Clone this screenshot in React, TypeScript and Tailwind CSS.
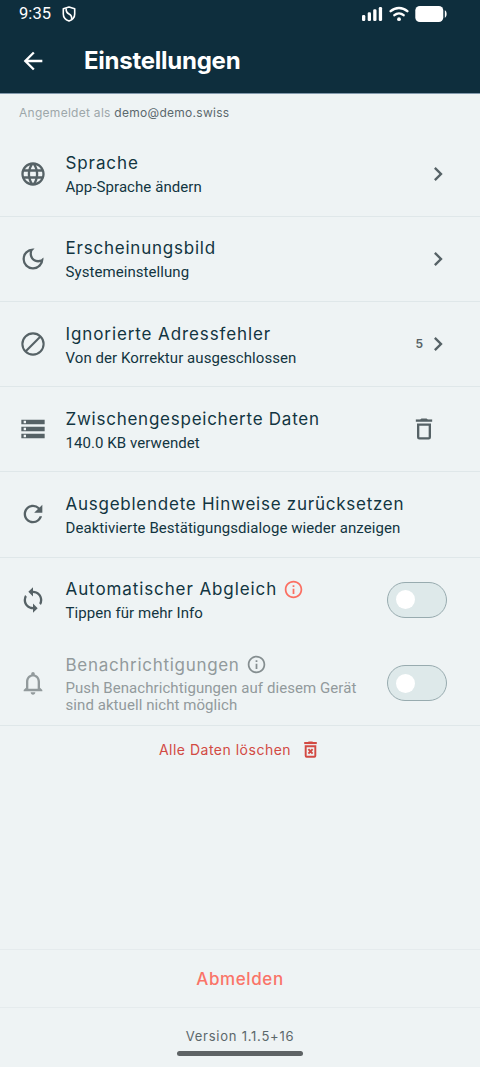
import type { ReactNode } from 'react';
import type { IconType } from 'react-icons';
import {
  MdArrowBack,
  MdChevronRight,
  MdInfoOutline,
  MdLanguage,
  MdNotificationsNone,
  MdOutlineDarkMode,
  MdRefresh,
  MdStorage,
  MdSync,
} from 'react-icons/md';

function StatusBar() {
  return (
    <div className="flex h-7 items-center pl-[19px] pr-[33px]">
      <span className="font-[Roboto,sans-serif] text-[16.5px] leading-none tracking-[0.1px]">9:35</span>
      <svg className="ml-[11px]" width="14" height="16" viewBox="0 0 14 16" fill="none" stroke="currentColor" strokeWidth="1.6">
        <path d="M7 1 12.700 2.800V8c0 3.200-2.200 5.700-5.700 7C3.500 13.700 1.300 11.200 1.300 8V2.800z" strokeLinejoin="round" />
        <path d="M4.200 2.500c-.4 3 .6 4.300 2.800 5.500s3 2.800 2.600 5" />
      </svg>
      <svg className="ml-auto" width="22" height="16" viewBox="0 0 22 16" fill="currentColor">
        <rect x="1" y="9" width="3.300" height="6" rx="1.300" />
        <rect x="6.700" y="6.300" width="3.300" height="8.700" rx="1.300" />
        <rect x="12.200" y="3.300" width="3.300" height="11.700" rx="1.300" />
        <rect x="17.800" y="1" width="3.300" height="14" rx="1.300" />
      </svg>
      <svg className="ml-[6px]" width="20" height="16" viewBox="0 0 20 16" fill="none" stroke="currentColor" strokeWidth="2.500" strokeLinecap="round">
        <path d="M1.700 5.200c4.700-4.300 11.900-4.300 16.600 0" />
        <path d="M5.400 9.100c2.700-2.300 6.500-2.300 9.200 0" />
        <circle cx="10" cy="13.200" r="1.900" fill="currentColor" stroke="none" />
      </svg>
      <svg className="ml-[6px]" width="32" height="16" viewBox="0 0 32 16" fill="currentColor">
        <rect x="0.300" y="0" width="28" height="16" rx="4.500" />
        <path d="M29.800 4.300c2.400.6 2.400 6.800 0 7.400z" />
      </svg>
    </div>
  );
}

function DisturbIcon() {
  return (
    <svg width="28" height="28" viewBox="0 0 24 24" fill="none" stroke="currentColor" strokeWidth="1.8">
      <circle cx="12" cy="12" r="9.1" />
      <path d="M5.600 18.400 18.400 5.600" />
    </svg>
  );
}

function TrashIcon() {
  return (
    <svg className="mr-[9px] text-[#566266]" width="28" height="28" viewBox="0 0 24 24" fill="none" stroke="currentColor" strokeWidth="2">
      <path d="M5 4.800h14" />
      <path d="M8.500 4.500c.6-1.300 1.300-1.600 2-1.600h3c.7 0 1.400.3 2 1.600z" fill="currentColor" stroke="none" />
      <path d="M7 8.200h10v10.900a1 1 0 0 1-1 1H8a1 1 0 0 1-1-1z" />
    </svg>
  );
}

function TrashCrossIcon() {
  return (
    <svg width="21" height="21" viewBox="0 0 24 24" fill="none" stroke="currentColor" strokeWidth="2.200">
      <path d="M4.800 4.600h14.400" strokeWidth="2.400" />
      <path d="M8.500 4.500c.6-1.300 1.300-1.700 2-1.700h3c.7 0 1.400.4 2 1.700z" fill="currentColor" stroke="none" />
      <path d="M6.500 8.200h11v11a1 1 0 0 1-1 1h-9a1 1 0 0 1-1-1z" />
      <path d="m9.600 11.500 4.800 5.200M14.400 11.500l-4.800 5.200" />
    </svg>
  );
}

interface RowProps {
  icon: ReactNode;
  title: string;
  titleClass?: string;
  subtitle: string;
  subtitleClass?: string;
  info?: 'alert' | 'muted';
  disabled?: boolean;
  className?: string;
  children?: ReactNode;
}

function Row({
  icon,
  title,
  titleClass = 'tracking-[0.9px]',
  subtitle,
  subtitleClass = 'leading-[18px]',
  info,
  disabled,
  className = 'h-[85.2px] border-b',
  children,
}: RowProps) {
  return (
    <div className={`flex shrink-0 items-center border-[#dfe7e9] pl-[18.5px] pr-[33px] ${className}`}>
      <div className={disabled ? 'text-[#929a9c]' : 'text-[#566266]'}>{icon}</div>
      <div className={`ml-[19px] flex-1 whitespace-nowrap ${disabled ? 'text-[#929a9c]' : 'text-[#123541]'}`}>
        <div className="flex h-6 items-center">
          <span className={`font-[Inter,sans-serif] text-[17px] leading-6 ${titleClass}`}>{title}</span>
          {info && (
            <MdInfoOutline size={21} className={`ml-[6px] ${info === 'alert' ? 'text-[#fb6f62]' : 'text-[#858e90]'}`} />
          )}
        </div>
        <p className={`mt-[3px] font-[Roboto,sans-serif] text-[15px] tracking-[0.07px] ${subtitleClass}`}>{subtitle}</p>
      </div>
      {children}
    </div>
  );
}

function Toggle() {
  return (
    <div className="flex h-[36px] w-[60px] shrink-0 items-center rounded-full border border-[#98abaf] bg-[#dee9ea] pl-[8px]">
      <div className="size-[19px] rounded-full bg-white" />
    </div>
  );
}

const icon = (Icon: IconType) => <Icon size={28} />;

const chevron = <MdChevronRight size={28} className="-mr-[5px] text-[#566266]" />;

export default function App() {
  return (
    <div className="flex h-[1067px] w-[480px] flex-col overflow-hidden bg-[#eef3f4]">
      <header className="h-[94px] shrink-0 border-b border-[#8299ac] bg-[#0e2e3d] text-white">
        <StatusBar />
        <div className="flex h-[65px] items-center pl-[19px]">
          <MdArrowBack size={28} />
          <h1 className="ml-[37px] pt-px font-[Inter,sans-serif] text-[24px] font-bold tracking-[-0.25px]">Einstellungen</h1>
        </div>
      </header>

      <p className="h-[37.6px] shrink-0 pl-[19px] pt-[9px] font-[Inter,sans-serif] text-[12px] leading-5 tracking-[0.28px] text-[#9da7aa]">
        Angemeldet als <span className="text-[#5b686d]">demo@demo.swiss</span>
      </p>

      <Row icon={icon(MdLanguage)} title="Sprache" subtitle="App-Sprache ändern">
        {chevron}
      </Row>
      <Row icon={icon(MdOutlineDarkMode)} title="Erscheinungsbild" titleClass="tracking-[0.78px]" subtitle="Systemeinstellung">
        {chevron}
      </Row>
      <Row icon={<DisturbIcon />} title="Ignorierte Adressfehler" subtitle="Von der Korrektur ausgeschlossen">
        <span className="mr-[1px] font-[Inter,sans-serif] text-[12px] font-semibold text-[#566266]">5</span>
        {chevron}
      </Row>
      <Row icon={icon(MdStorage)} title="Zwischengespeicherte Daten" titleClass="tracking-[0.75px]" subtitle="140.0 KB verwendet">
        <TrashIcon />
      </Row>
      <Row
        icon={icon(MdRefresh)}
        title="Ausgeblendete Hinweise zurücksetzen"
        titleClass="tracking-[0.75px]"
        subtitle="Deaktivierte Bestätigungsdialoge wieder anzeigen"
      />
      <Row icon={icon(MdSync)} title="Automatischer Abgleich" subtitle="Tippen für mehr Info" info="alert" className="h-[84.4px]">
        <Toggle />
      </Row>
      <Row
        icon={icon(MdNotificationsNone)}
        title="Benachrichtigungen"
        titleClass="tracking-[0.7px]"
        subtitle={'Push Benachrichtigungen auf diesem Gerät\nsind aktuell nicht möglich'}
        subtitleClass="whitespace-pre leading-[17px]"
        info="muted"
        disabled
        className="h-[84px] border-b"
      >
        <Toggle />
      </Row>

      <button className="flex h-[48px] shrink-0 items-center justify-center gap-[9px] text-[#d24a43]">
        <span className="font-[Inter,sans-serif] text-[14px] tracking-[0.5px]">Alle Daten löschen</span>
        <TrashCrossIcon />
      </button>

      <footer className="mt-auto shrink-0">
        <button className="flex h-[58px] w-full items-center justify-center border-t border-[#e5ebed] pt-[2px] font-[Inter,sans-serif] text-[17px] font-medium tracking-[0.6px] text-[#fa7468]">
          Abmelden
        </button>
        <div className="flex h-[60px] flex-col items-center border-t border-[#e5ebed] pt-[18px]">
          <span className="font-[Inter,sans-serif] text-[13px] leading-5 tracking-[0.75px] text-[#5b676b]">Version 1.1.5+16</span>
          <div className="mt-[5px] h-[5px] w-[126px] rounded-full bg-[#5e6365]" />
        </div>
      </footer>
    </div>
  );
}
